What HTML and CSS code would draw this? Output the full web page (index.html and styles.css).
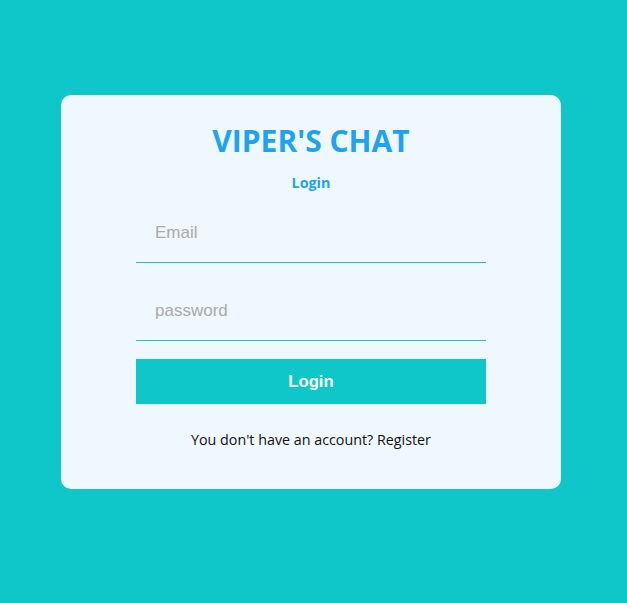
FILE: index.html
```html
<!DOCTYPE html>
<html>
<head>
<meta charset="utf-8">
<link rel="stylesheet" href="styles.css">
</head>
<body>
<div class="page">
  <div class="card">
    <h1 class="title">VIPER'S CHAT</h1>
    <div class="subtitle">Login</div>
    <form class="form">
      <input class="field" type="email" placeholder="Email">
      <input class="field" type="password" placeholder="password">
      <button class="btn" type="button">Login</button>
    </form>
    <p class="footer">You don't have an account? Register</p>
  </div>
</div>
</body>
</html>
```
FILE: styles.css
```css
html, body {
  margin: 0;
  padding: 0;
}
body {
  background: #0fc7c8;
  min-height: 100vh;
}
.page {
  padding: 95px 0 0 61px;
}
.card {
  box-sizing: border-box;
  width: 500px;
  height: 394px;
  background: #eff7ff;
  border-radius: 10px;
  display: flex;
  flex-direction: column;
  align-items: center;
  padding-top: 24px;
  font-family: "Open Sans", "Noto Sans", sans-serif;
}
.title {
  margin: 0;
  font-size: 30px;
  line-height: 44px;
  font-weight: 700;
  color: #20a3ef;
}
.subtitle {
  margin-top: 10px;
  font-size: 14.3px;
  line-height: 20px;
  font-weight: 700;
  color: #20a3ef;
}
.form {
  margin-top: 11px;
  width: 350px;
  display: flex;
  flex-direction: column;
  gap: 19px;
}
.field {
  -webkit-appearance: none;
  appearance: none;
  box-sizing: border-box;
  width: 100%;
  height: 59px;
  padding: 0 19px;
  border: 0;
  border-bottom: 1px solid #22c0c2;
  border-radius: 0;
  background: transparent;
  font-family: "Liberation Sans", Arial, sans-serif;
  font-size: 17px;
  outline: none;
}
.field::placeholder {
  color: #aaaaaa;
}
.btn {
  margin-top: -1px;
  height: 45px;
  border: none;
  background: #0fc7c8;
  color: #ffffff;
  font-family: "Liberation Sans", Arial, sans-serif;
  font-size: 16.7px;
  font-weight: 700;
}
.footer {
  margin: 26px 0 0;
  font-size: 14.3px;
  line-height: 20px;
  color: #111111;
}
```
